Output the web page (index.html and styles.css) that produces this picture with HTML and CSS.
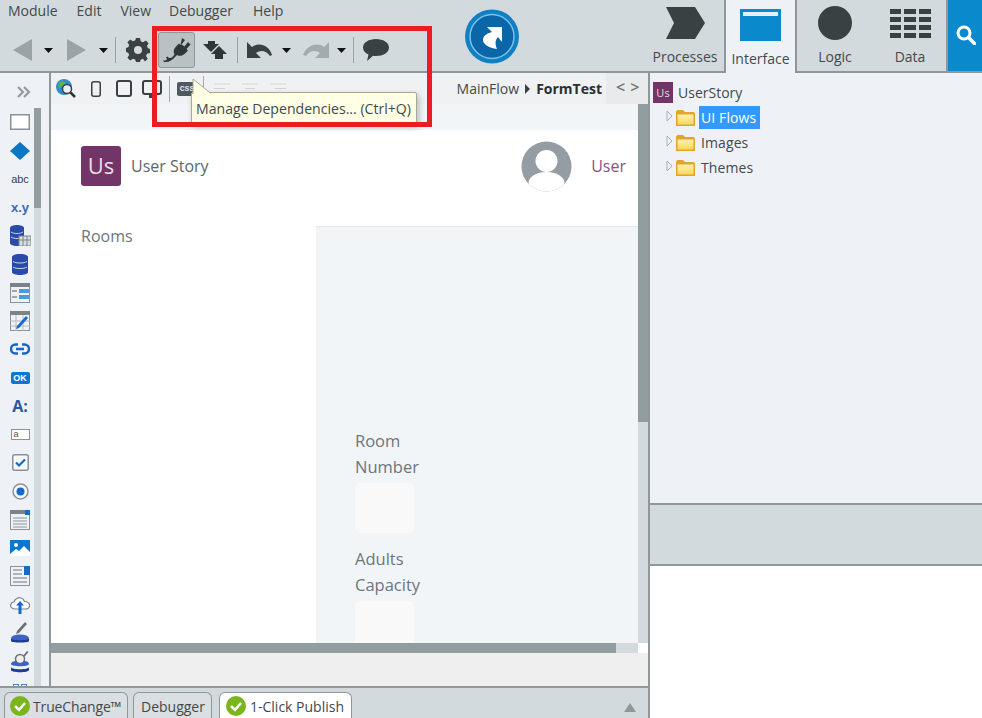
FILE: index.html
```html
<!DOCTYPE html>
<html lang="en">
<head>
<meta charset="utf-8">
<title>Service Studio</title>
<link rel="stylesheet" href="styles.css">
</head>
<body>
<div class="app">
  <header class="top">
    <div class="top-left">
      <nav class="menu"><span>Module</span><span>Edit</span><span>View</span><span>Debugger</span><span>Help</span></nav>
      <div class="tools">
        <svg class="t19" width="19" height="22" viewBox="0 0 19 22"><path d="M19 0V22L0 11Z" fill="#9ba3a6"/></svg>
        <svg class="caret m12" width="9" height="5" viewBox="0 0 9 5"><path d="M0 0H9L4.500 5Z" fill="#111"/></svg>
        <svg class="t19 m14" width="19" height="22" viewBox="0 0 19 22"><path d="M0 0V22L19 11Z" fill="#9ba3a6"/></svg>
        <svg class="caret m13" width="9" height="5" viewBox="0 0 9 5"><path d="M0 0H9L4.500 5Z" fill="#111"/></svg>
        <span class="sep m7"></span>
        <svg class="m10" width="24" height="24" viewBox="0 0 24 24"><path fill="#3a4142" fill-rule="evenodd" d="M10 0h4l.7 3.200 2.300 1 2.800-1.800 2.800 2.800L21 8l1 2.300 2 .7v4l-3 .7-1 2.300 1.800 2.800-2.800 2.800L17 20.800l-2.300 1L14 24h-4l-.7-2.200-2.300-1L4.200 22.600 1.400 19.800 3.200 17l-1-2.300L0 14v-4l2.200-.7 1-2.300L1.400 4.200 4.200 1.400 7 3.200l2.300-1zM12 8a4 4 0 1 0 0 8 4 4 0 0 0 0-8z"/></svg>
        <span class="plug m8"><svg width="28" height="26" viewBox="0 0 28 26"><path fill="#2f3637" d="M19 1l3 2-3.500 4.500 3 2L25 5l2.500 2.500-4 4.500 1.500 1.500-3 3c-2.500 2.500-5.500 3-8 1.500L12 20c-2.500 3-6 5.500-11 5l-1-1.500c3.500.5 5-1 3-3l1.500-1c1.500 1.500 3 2.500 5 .500l2-2.500c-1.500-2.500-1-5.500 1.500-8l3-3 1.500 1.500z"/></svg></span>
        <svg class="m8" width="24" height="19" viewBox="0 0 24 19"><path fill="#2f3637" d="M0 3h5V0h7v3h4L8 11z"/><path fill="#2f3637" d="M16 5l8 8h-4v5h-8v-5H8z"/></svg>
        <span class="sep m10"></span>
        <svg class="m9" width="25" height="17" viewBox="0 0 25 17"><path fill="#3a4142" d="M0 0V16H14L9 11C13 8 19 8 23 14L25 13C22 3 12 0 5 5Z"/></svg>
        <svg class="caret m10" width="9" height="5" viewBox="0 0 9 5"><path d="M0 0H9L4.500 5Z" fill="#111"/></svg>
        <svg class="m12" width="26" height="17" viewBox="0 0 26 17"><path fill="#a3abae" d="M26 0V16H12L17 11C13 8 7 8 3 14L0 13C4 3 14 0 21 5Z"/></svg>
        <svg class="caret m8" width="9" height="5" viewBox="0 0 9 5"><path d="M0 0H9L4.500 5Z" fill="#111"/></svg>
        <span class="sep m7"></span>
        <svg class="m9" width="26" height="23" viewBox="0 0 26 23"><path fill="#3a4142" d="M13 0c7 0 13 3.500 13 8.500S20 17 13 17c-1 0-2 0-3-.2L4 22l1.500-6.500C2 14 0 11.500 0 8.500 0 3.500 6 0 13 0z"/></svg>
      </div>
    </div>
    <div class="publish"><svg width="54" height="55" viewBox="0 0 54 55"><circle cx="27" cy="27.500" r="27" fill="#0f80c4"/><circle cx="27" cy="27.500" r="22" fill="#0b66a8" stroke="#7cc0e6" stroke-width="1.500"/><path fill="#fff" d="M22 18H37V33L33 28C30 31 30 35 32 40C24 39 17 35 18 30C19 26 23 24 27 23Z"/></svg></div>
    <div class="tabs">
      <div class="tab tab-proc"><svg width="39" height="32" viewBox="0 0 39 32"><path fill="#3a4142" d="M0 0H29L39 16 29 32H0L8 16Z"/></svg><span>Processes</span></div>
      <div class="tab tab-int"><svg width="41" height="32" viewBox="0 0 41 32"><rect width="41" height="32" fill="#0a8acd"/><rect x="3" y="3" width="35" height="4" fill="#e3f1f9"/></svg><span>Interface</span></div>
      <div class="tab tab-logic"><svg width="34" height="34" viewBox="0 0 34 34"><circle cx="17" cy="17" r="17" fill="#3a4142"/></svg><span>Logic</span></div>
      <div class="tab tab-data"><svg width="41" height="29" viewBox="0 0 41 29"><path fill="#3a4142" d="M0 0h11v5H0zM14 0h12v5H14zM29 0h12v5H29zM0 8h11v5H0zM14 8h12v5H14zM29 8h12v5H29zM0 16h11v5H0zM14 16h12v5H14zM29 16h12v5H29zM0 24h11v5H0zM14 24h12v5H14zM29 24h12v5H29z"/></svg><span>Data</span></div>
      <div class="search"><svg width="20" height="20" viewBox="0 0 20 20"><circle cx="8" cy="8" r="6" fill="none" stroke="#fff" stroke-width="3"/><path d="M12.500 12.500L18.500 18.500" stroke="#fff" stroke-width="3.500" stroke-linecap="round"/></svg></div>
    </div>
  </header>

  <div class="main">
    <section class="left">
      <div class="work">
        <aside class="palette">
          <div class="pal-more"><svg width="14" height="12" viewBox="0 0 14 12"><path d="M1 1l5 5-5 5M7 1l5 5-5 5" fill="none" stroke="#939b9f" stroke-width="2.200"/></svg></div>
          <div class="pal-body">
            <div class="pal-icons">
              <svg width="20" height="16" viewBox="0 0 20 16"><rect x=".75" y=".75" width="18.500" height="14.500" fill="#fff" stroke="#8a9296" stroke-width="1.500"/></svg>
              <svg width="20" height="18" viewBox="0 0 20 18"><path d="M10 0l10 9-10 9L0 9z" fill="#0c76c6"/></svg>
              <span class="pal-abc">abc</span>
              <span class="pal-xy">x.y</span>
              <svg width="21" height="21" viewBox="0 0 21 21"><path d="M0 3c0-4 14-4 14 0v15c0 4-14 4-14 0z" fill="#2a4aa8"/><path d="M1 7c3 2 9 2 12 0M1 12c3 2 9 2 12 0" stroke="#c8d4ee" fill="none"/><rect x="9" y="11" width="12" height="10" fill="#d6dce0" stroke="#7f888c"/><path d="M13 11v10M17 11v10M9 15h12" stroke="#7f888c"/></svg>
              <svg width="16" height="21" viewBox="0 0 16 21"><path d="M0 3c0-4 16-4 16 0v15c0 4-16 4-16 0z" fill="#2a4aa8"/><path d="M1 7.500c3 2 11 2 14 0M1 13c3 2 11 2 14 0" stroke="#c8d4ee" fill="none"/></svg>
              <svg width="20" height="20" viewBox="0 0 20 20"><rect x=".5" y=".5" width="19" height="19" fill="#eef2f6" stroke="#8a9296"/><rect y="0" width="20" height="4" fill="#7b8387"/><rect x="9" y="6" width="10" height="4" fill="#4a9ae0"/><rect x="9" y="12" width="10" height="4" fill="#4a9ae0"/><path d="M2 8h5M2 14h5" stroke="#555"/></svg>
              <svg width="20" height="20" viewBox="0 0 20 20"><rect x=".5" y=".5" width="19" height="19" fill="#eef2f6" stroke="#8a9296"/><rect width="20" height="4" fill="#7b8387"/><path d="M0 10h20M0 15h20M6 4v16M13 4v16" stroke="#b5bcc0"/><path d="M7 15L16 5l2 2-9 10-3 1z" fill="#1769c9"/></svg>
              <svg width="20" height="12" viewBox="0 0 20 12"><path d="M8 1.500H5.500a4.500 4.500 0 0 0 0 9H8M12 1.500h2.500a4.500 4.500 0 0 1 0 9H12M6 6h8" fill="none" stroke="#1a66c0" stroke-width="2.500"/></svg>
              <span class="pal-ok">OK</span>
              <span class="pal-a">A:</span>
              <span class="pal-input">a</span>
              <svg width="17" height="17" viewBox="0 0 17 17"><rect x=".75" y=".75" width="15.500" height="15.500" rx="2" fill="#f6f8fa" stroke="#8a9296" stroke-width="1.500"/><path d="M4 8.500l3 3 6-6" fill="none" stroke="#1769c9" stroke-width="2.200"/></svg>
              <svg width="17" height="17" viewBox="0 0 17 17"><circle cx="8.500" cy="8.500" r="7.500" fill="#f6f8fa" stroke="#8a9296" stroke-width="1.500"/><circle cx="8.500" cy="8.500" r="4" fill="#1769c9"/></svg>
              <svg width="20" height="20" viewBox="0 0 20 20"><rect x=".5" y=".5" width="19" height="19" fill="#eef2f6" stroke="#8a9296"/><rect width="20" height="4" fill="#7b8387"/><rect x="15" width="5" height="5" fill="#1769c9"/><path d="M3 8h14M3 11h14M3 14h14M3 17h14" stroke="#8a9296"/></svg>
              <svg width="20" height="16" viewBox="0 0 20 16"><rect width="20" height="16" fill="#0c76d0"/><circle cx="6" cy="5" r="2" fill="#fff"/><path d="M0 14l6-5 3 2 5-5 6 6v4H0z" fill="#fff"/></svg>
              <svg width="20" height="20" viewBox="0 0 20 20"><rect x=".5" y=".5" width="19" height="19" fill="#eef2f6" stroke="#8a9296"/><rect x="14" width="6" height="9" fill="#1769c9"/><path d="M3 4h9M3 8h9M3 12h14M3 16h14" stroke="#6f777b"/></svg>
              <svg width="20" height="18" viewBox="0 0 20 18"><path d="M5 13C1 13 0 10 1 8c.5-1.500 2-2 3-2 1-3 4-5 7-4 2 .5 3 2 3.500 3.500C17 5.500 20 7 19.500 10c-.5 2.500-2 3-4 3z" fill="#fff" stroke="#7b8387" stroke-width="1.200"/><path d="M10 5l4 4.500h-2.500V18h-3V9.500H6z" fill="#1769c9"/></svg>
              <svg width="18" height="22" viewBox="0 0 18 22"><path d="M14 0l2 2-8 9-3 1 1-3z" fill="#6b7376"/><ellipse cx="9" cy="16" rx="9" ry="3.500" fill="#3f62c4"/><path d="M0 16v3c0 2 18 2 18 0v-3c0 3-18 3-18 0z" fill="#1f3b94"/></svg>
              <svg width="18" height="23" viewBox="0 0 18 23"><path d="M11 7l5-6 1.500 1-5 6z" fill="#6b7376"/><circle cx="9" cy="9" r="4.500" fill="#f0f0f0" stroke="#6b7376" stroke-width="1.500"/><path d="M0 14c0-2 3-3 5-3 1 3 7 3 8 0 3 0 5 1 5 3 0 3-18 3-18 0z" fill="#3f62c4"/><path d="M0 17v3c0 3 18 3 18 0v-3c0 3-18 3-18 0z" fill="#1f3b94"/></svg>
              <svg width="14" height="12" viewBox="0 0 14 12"><rect x=".5" y=".5" width="5" height="5" fill="none" stroke="#4a80d0"/><rect x="8.500" y=".5" width="5" height="5" fill="none" stroke="#4a80d0"/></svg>
            </div>
            <div class="pal-scroll"><div class="pal-thumb"></div></div>
          </div>
        </aside>
        <div class="editor">
          <div class="ed-bar">
            <svg class="e-globe" width="20" height="19" viewBox="0 0 20 19"><circle cx="8" cy="8" r="8" fill="#2e8fc9"/><path d="M3 3c3-2 6-1 6 1s-3 2-4 4-3 1-2-5zM10 10l4-2 2 3-3 4z" fill="#5fae57"/><circle cx="11" cy="10" r="4.500" fill="#e6f0f6" stroke="#3a4142" stroke-width="1.500"/><path d="M14.500 13.500L19 18" stroke="#2f3637" stroke-width="2.500"/></svg>
            <svg class="e-phone" width="10" height="16" viewBox="0 0 10 16"><rect x=".75" y=".75" width="8.500" height="14.500" rx="2" fill="none" stroke="#3a4142" stroke-width="1.500"/></svg>
            <svg class="e-tablet" width="16" height="17" viewBox="0 0 16 17"><rect x="1" y="1" width="14" height="15" rx="2" fill="none" stroke="#3a4142" stroke-width="2"/></svg>
            <svg class="e-monitor" width="20" height="18" viewBox="0 0 20 18"><rect x="1" y="1" width="18" height="13" rx="2" fill="none" stroke="#3a4142" stroke-width="2"/><path d="M7 14h5v4H7z" fill="#3a4142"/></svg>
            <span class="ed-sep e-s1"></span>
            <span class="css">CSS</span>
            <span class="ed-sep e-s2"></span>
            <svg class="e-al1" width="16" height="11" viewBox="0 0 16 11"><path d="M0 1h16M0 5.500h11M0 10h16" stroke="#d3d6d8"/></svg>
            <svg class="e-al2" width="16" height="11" viewBox="0 0 16 11"><path d="M0 1h16M3 5.500h10M0 10h16" stroke="#d3d6d8"/></svg>
            <svg class="e-al2" width="16" height="11" viewBox="0 0 16 11"><path d="M0 1h16M5 5.500h11M0 10h16" stroke="#d3d6d8"/></svg>
            <div class="crumb"><span>MainFlow</span><i class="crumb-arrow"></i><b>FormTest</b></div>
            <div class="code"><span>&lt;</span><span>&gt;</span></div>
          </div>
          <div class="canvas">
            <div class="canvas-view">
              <div class="canvas-strip"></div>
              <div class="page">
                <div class="page-head">
                  <div class="logo">Us</div>
                  <div class="brand">User Story</div>
                  <svg class="avatar" width="51" height="51" viewBox="0 0 51 51"><defs><clipPath id="av"><circle cx="25.500" cy="25.500" r="25"/></clipPath></defs><circle cx="25.500" cy="25.500" r="25" fill="#949da3"/><g clip-path="url(#av)"><circle cx="25.500" cy="20" r="11" fill="#fff"/><ellipse cx="25.500" cy="42" rx="18" ry="11" fill="#fff"/></g></svg>
                  <div class="user">User</div>
                </div>
                <div class="page-body">
                  <div class="side">Rooms</div>
                  <div class="form">
                    <div class="lbl">Room<br>Number</div>
                    <div class="inp"></div>
                    <div class="lbl">Adults<br>Capacity</div>
                    <div class="inp"></div>
                  </div>
                </div>
              </div>
              <div class="hscroll"><div class="hthumb"></div><div class="hcorner"></div></div>
              <div class="canvas-foot"></div>
            </div>
            <div class="vscroll"><div class="vthumb"></div></div>
          </div>
        </div>
      </div>
      <footer class="bottom">
        <div class="btab b1"><svg width="20" height="20" viewBox="0 0 20 20"><circle cx="10" cy="10" r="10" fill="#7ab51d"/><path d="M5 10l4 4 6-7" fill="none" stroke="#fff" stroke-width="2.500"/></svg><span>TrueChange™</span></div>
        <div class="btab b2"><span>Debugger</span></div>
        <div class="btab b3"><svg width="20" height="20" viewBox="0 0 20 20"><circle cx="10" cy="10" r="10" fill="#7ab51d"/><path d="M5 10l4 4 6-7" fill="none" stroke="#fff" stroke-width="2.500"/></svg><span>1-Click Publish</span></div>
        <svg class="collapse" width="12" height="9" viewBox="0 0 12 9"><path d="M6 0l6 9H0z" fill="#8f9799"/></svg>
      </footer>
    </section>
    <aside class="right">
      <div class="tree">
        <div class="tree-root"><span class="us">Us</span><span>UserStory</span></div>
        <div class="tree-row"><svg class="tri" width="7" height="12" viewBox="0 0 7 12"><path d="M1 1l5 5-5 5z" fill="#eef2f6" stroke="#a9b0b4"/></svg><svg class="folder" width="19" height="16" viewBox="0 0 19 16"><defs><linearGradient id="fg" x1="0" y1="0" x2="0" y2="1"><stop offset="0" stop-color="#fff2b0"/><stop offset="1" stop-color="#fbd65a"/></linearGradient></defs><path d="M0 2.500C0 1 1 0 2 0h5l2 2h8c1 0 2 1 2 2v12H0z" fill="#e0a52a"/><rect x="1.500" y="4.500" width="16" height="10" fill="url(#fg)"/></svg><span class="sel">UI Flows</span></div>
        <div class="tree-row"><svg class="tri" width="7" height="12" viewBox="0 0 7 12"><path d="M1 1l5 5-5 5z" fill="#eef2f6" stroke="#a9b0b4"/></svg><svg class="folder" width="19" height="16" viewBox="0 0 19 16"><path d="M0 2.500C0 1 1 0 2 0h5l2 2h8c1 0 2 1 2 2v12H0z" fill="#e0a52a"/><rect x="1.500" y="4.500" width="16" height="10" fill="url(#fg)"/></svg><span class="name">Images</span></div>
        <div class="tree-row"><svg class="tri" width="7" height="12" viewBox="0 0 7 12"><path d="M1 1l5 5-5 5z" fill="#eef2f6" stroke="#a9b0b4"/></svg><svg class="folder" width="19" height="16" viewBox="0 0 19 16"><path d="M0 2.500C0 1 1 0 2 0h5l2 2h8c1 0 2 1 2 2v12H0z" fill="#e0a52a"/><rect x="1.500" y="4.500" width="16" height="10" fill="url(#fg)"/></svg><span class="name">Themes</span></div>
      </div>
      <div class="props-bar"></div>
      <div class="props"></div>
    </aside>
  </div>

  <div class="tooltip"><svg class="tip-arrow" width="20" height="16" viewBox="0 0 20 16"><path d="M1 16V1L19 15.500" fill="#ffffe6" stroke="#a9a996"/></svg>Manage Dependencies... (Ctrl+Q)</div>
  <div class="redbox"></div>
</div>
</body>
</html>
```

FILE: styles.css
```css
* { box-sizing: border-box; }
html, body { margin: 0; padding: 0; }
body { font-family: "Open Sans", "Noto Sans", sans-serif; color: #3a4142; overflow: hidden; }
svg { display: block; flex: none; }
.app { position: relative; width: 982px; height: 718px; display: flex; flex-direction: column; background: #d2dadd; overflow: hidden; }

/* top */
.top { height: 73px; display: flex; flex: none; background: #d2dadd; }
.top-left { width: 465px; flex: none; }
.menu { display: flex; height: 32px; padding: 0 0 0 8px; font-size: 14px; line-height: 21px; color: #43494b; }
.menu span:nth-child(2) { margin-left: 19px; }
.menu span:nth-child(3) { margin-left: 19px; }
.menu span:nth-child(4) { margin-left: 18px; }
.menu span:nth-child(5) { margin-left: 20px; }
.tools { height: 36px; display: flex; align-items: center; padding-left: 13px; }
.m7 { margin-left: 7px; } .m8 { margin-left: 8px; } .m9 { margin-left: 9px; } .m10 { margin-left: 10px; }
.m12 { margin-left: 12px; } .m13 { margin-left: 13px; } .m14 { margin-left: 14px; }
.sep { width: 1px; height: 26px; background: #9aa2a5; flex: none; }
.plug { width: 37px; height: 36px; border: 1px solid #8f9799; border-radius: 3px; background: #b9c1c4; display: flex; align-items: center; justify-content: center; flex: none; }
.publish { width: 54px; padding-top: 9px; flex: none; }
.tabs { display: flex; margin-left: 131px; flex: 1; height: 73px; border-bottom: 2px solid #8f9799; }
.tab { display: flex; flex-direction: column; align-items: center; font-size: 14px; color: #43494b; flex: none; position: relative; }
.tab span { position: absolute; left: 0; right: 0; text-align: center; top: 47px; line-height: 20px; }
.tab-proc { width: 74px; padding: 7px 3px 0 0; }
.tab-proc span { right: 4px; }
.tab-int { width: 73px; padding-top: 9px; height: 73px; background: #eef2f6; border-left: 2px solid #8f9799; border-right: 2px solid #8f9799; }
.tab-int span { top: 49px; }
.tab-logic { width: 76px; padding-top: 6px; }
.tab-data { width: 73px; padding: 9px 0 0 1px; }
.tab-data span { left: 1px; }
.search { width: 37px; height: 71px; background: #0a8acd; border-left: 2px solid #8f9799; display: flex; justify-content: center; padding-top: 25px; flex: none; }

/* main */
.main { flex: 1; display: flex; min-height: 0; }
.left { width: 650px; flex: none; display: flex; flex-direction: column; border-right: 2px solid #8f9799; margin-top: -2px; }
.work { flex: 1; display: flex; min-height: 0; border-top: 2px solid #8f9799; }
.palette { width: 51px; flex: none; background: #eef2f6; border-right: 2px solid #8f9799; overflow: hidden; display: flex; flex-direction: column; }
.pal-more { height: 35px; display: flex; align-items: center; justify-content: center; padding: 3px 2px 0 0; flex: none; }
.pal-body { flex: 1; display: flex; min-height: 0; }
.pal-icons { width: 32px; margin: 0 -2px 0 4px; display: grid; grid-auto-rows: 28.400px; justify-items: center; align-items: center; align-content: start; height: 578px; overflow: hidden; flex: none; }
.pal-abc { font-size: 11px; font-weight: 400; color: #3a4142; font-family: "Liberation Sans", sans-serif; }
.pal-xy { font-size: 13px; font-weight: 700; color: #3a68b4; font-family: "Liberation Sans", sans-serif; }
.pal-ok { width: 19px; height: 12px; border-radius: 2px; background: #0c76d0; color: #fff; font-size: 9px; line-height: 12px; font-weight: 700; text-align: center; font-family: "Liberation Sans", sans-serif; }
.pal-a { font-size: 16px; font-weight: 700; color: #2a5a9c; font-family: "Open Sans", sans-serif; }
.pal-input { width: 19px; height: 11px; border: 1px solid #8a9296; background: #fff; font-size: 9px; line-height: 9px; padding-left: 2px; color: #555; font-family: "Liberation Sans", sans-serif; }
.pal-scroll { width: 7px; background: #d2dadd; height: 578px; flex: none; }
.pal-thumb { height: 100px; background: #929da2; }

.editor { flex: 1; display: flex; flex-direction: column; min-width: 0; }
.ed-bar { height: 31px; flex: none; display: flex; align-items: center; background: #f0f1f2; position: relative; }
.e-globe { margin-left: 5px; }
.e-phone { margin-left: 15px; }
.e-tablet { margin-left: 15px; }
.e-monitor { margin-left: 10px; }
.ed-sep { width: 1px; height: 26px; background: #a3aaad; flex: none; }
.e-s1 { margin-left: 7px; }
.css { margin-left: 7px; width: 20px; height: 14px; background: #4f5a60; color: #e6e9ea; font-size: 8px; line-height: 14px; font-weight: 700; text-align: center; border-radius: 2px; flex: none; font-family: "Liberation Mono", monospace; }
.e-s2 { margin-left: 6px; }
.e-al1 { margin-left: 10px; }
.e-al2 { margin-left: 12px; }
.crumb { margin-left: auto; display: flex; align-items: center; font-size: 14px; color: #43494b; margin-right: 4px; }
.crumb-arrow { width: 0; height: 0; border-left: 5px solid #3a4142; border-top: 5px solid transparent; border-bottom: 5px solid transparent; margin: 0 6px 0 6px; }
.crumb b { font-weight: 700; color: #2a2f30; }
.code { width: 42px; height: 31px; background: #e9eaeb; display: flex; justify-content: flex-start; gap: 5px; padding-left: 10px; font-size: 16px; line-height: 28px; font-weight: 600; color: #6c7477; flex: none; }

.canvas { flex: 1; display: flex; min-height: 0; background: #fff; }
.canvas-view { width: 587px; flex: none; display: flex; flex-direction: column; background: #f1f5f8; position: relative; }
.canvas-strip { height: 26px; flex: none; background: #f1f5f8; }
.page { flex: none; height: 513px; background: #fff; overflow: hidden; display: flex; flex-direction: column; }
.page-head { height: 96px; flex: none; display: flex; align-items: center; padding: 0 12px 24px 30px; font-size: 16px; }
.logo { width: 40px; height: 40px; border-radius: 3px; background: #733467; color: #e9dfe8; font-size: 22px; line-height: 39px; text-align: center; flex: none; }
.brand { margin-left: 10px; color: #5c666c; }
.avatar { margin-left: auto; }
.user { margin-left: 19px; color: #8a5285; }
.page-body { flex: 1; display: flex; min-height: 0; }
.side { width: 265px; flex: none; padding: 0 0 0 30px; font-size: 16px; line-height: 20px; color: #6c767c; }
.form { flex: 1; background: #f1f5f8; border-top: 1px solid #e6eaed; padding: 201px 0 0 39px; font-size: 16.500px; line-height: 26px; color: #6c767c; }
.inp { width: 59px; height: 50px; margin: 3px 0 13px; background: #f9f9f9; border-radius: 5px; }
.hscroll { height: 10px; flex: none; display: flex; background: #fff; }
.hthumb { width: 565px; background: #929da2; }
.hcorner { flex: 1; background: #d2dadd; }
.canvas-foot { flex: 1; background: #efefef; margin-right: -10px; position: relative; }
.vscroll { width: 10px; flex: none; background: #d2dadd; height: 539px; }
.vthumb { height: 318px; background: #929da2; }

/* bottom */
.bottom { height: 32px; flex: none; display: flex; align-items: flex-end; background: #d2dadd; border-top: 2px solid #8f9799; padding-left: 4px; position: relative; font-size: 14px; color: #43494b; }
.btab { height: 26px; display: flex; align-items: center; background: #d9dfe2; border: 1px solid #8f9799; border-bottom: 0; border-radius: 6px 6px 0 0; flex: none; padding-top: 1px; }
.b1 { width: 124px; padding-left: 5px; }
.b1 span { margin-left: 3px; letter-spacing: -.15px; }
.b3 span { margin-left: 4px; }
.b2 { width: 79px; margin-left: 5px; padding-left: 7px; }
.b3 { width: 133px; margin-left: 7px; padding-left: 6px; background: #fff; }
.collapse { position: absolute; right: 12px; top: 15px; }

/* right */
.right { flex: 1; display: flex; flex-direction: column; min-width: 0; }
.tree { height: 430px; flex: none; background: #eef2f6; padding: 9px 0 0 3px; font-size: 14px; color: #43494b; }
.tree-root { display: flex; align-items: center; height: 21px; }
.us { width: 20px; height: 21px; background: #733467; color: #e6dbe4; font-size: 11px; line-height: 21px; text-align: center; margin-right: 5px; flex: none; }
.tree-row { display: flex; align-items: center; height: 25px; padding-left: 13px; }
.tree-root + .tree-row { margin-top: 2px; }
.tri { margin-top: -3px; }
.folder { margin-left: 3px; }
.sel { margin-left: 4px; height: 23px; line-height: 23px; padding: 0 4px 0 2px; background: #3399ff; color: #fff; letter-spacing: .1px; }
.name { margin-left: 6px; letter-spacing: .1px; }
.props-bar { height: 63px; flex: none; background: #d2dadd; border-top: 2px solid #8f9799; border-bottom: 2px solid #8f9799; }
.props { flex: 1; background: #fff; }

/* overlays */
.tooltip { position: absolute; left: 191px; top: 92px; width: 226px; height: 32px; background: #ffffe6; border: 1px solid #a9a996; border-radius: 2px; box-shadow: 2px 3px 6px rgba(0,0,0,.25); font-size: 14.100px; line-height: 31px; padding-left: 4px; color: #43494b; white-space: nowrap; }
.tip-arrow { position: absolute; left: 0; top: -15px; }
.redbox { position: absolute; left: 152px; top: 26px; width: 280px; height: 101px; border: 5px solid #ed1c24; }
```
